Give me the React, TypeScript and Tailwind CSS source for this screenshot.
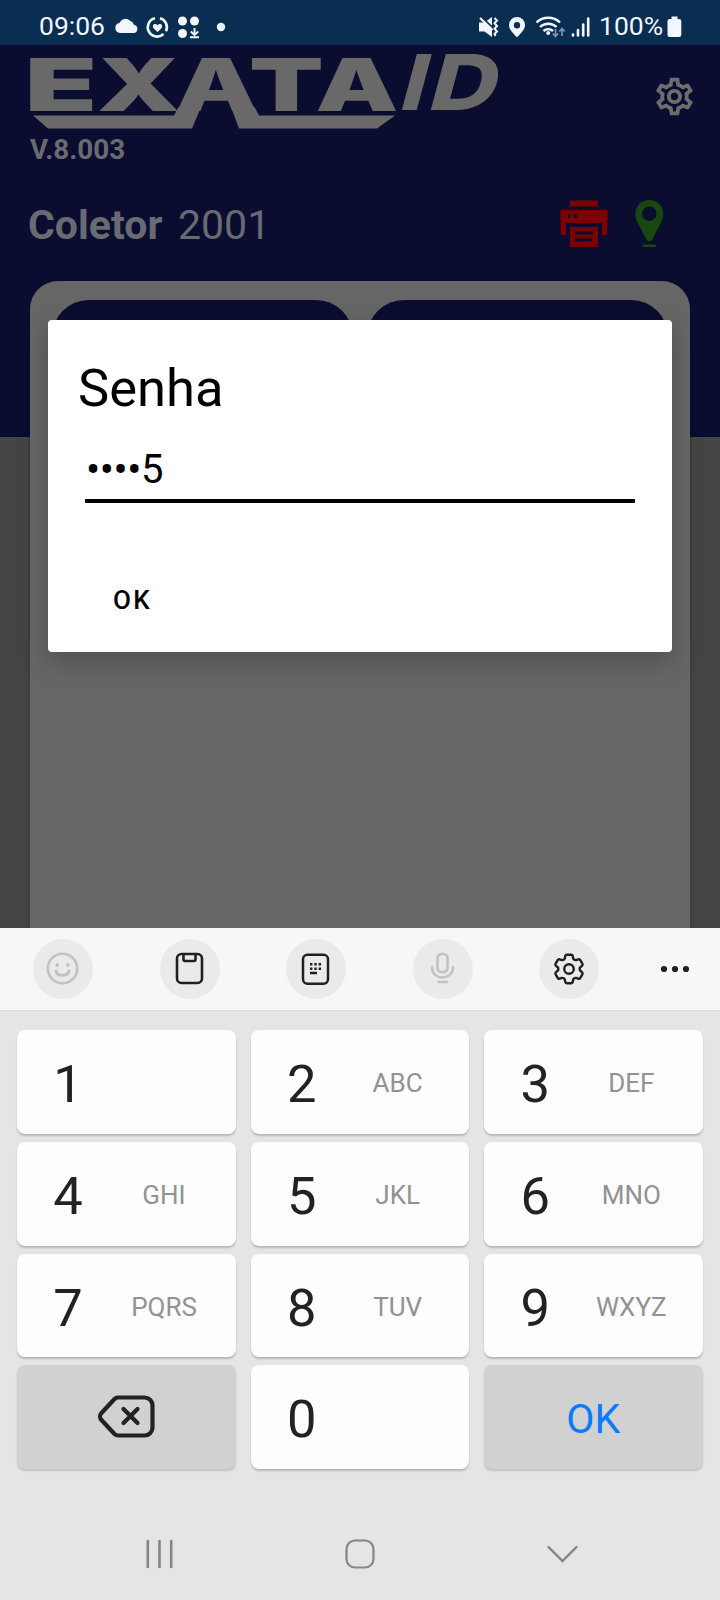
import React from "react";
import { MdOutlineSettings } from "react-icons/md";
import { HiOutlineCog6Tooth } from "react-icons/hi2";

function StatusBar() {
  return (
    <div className="flex h-[45px] shrink-0 items-center bg-[#092e52] pl-[39px] pt-[8px] text-[26.5px] leading-none text-[#f2f6ff]">
      <span className="w-[75px]">09:06</span>
      <svg className="h-[24px] w-[112px]" viewBox="114 14 112 24" fill="#f2f6ff">
        <path d="M120 32a5 5 0 0 1-.6-9.900 6.500 6.500 0 0 1 11-2 5.500 5.500 0 0 1 3.500 3.600 4.200 4.200 0 0 1-.2 8.300z" />
        <path d="M155 17.200A9.300 9.300 0 1 0 163.500 33M160 17.300a9.300 9.300 0 0 1 6 13" fill="none" stroke="#f2f6ff" strokeWidth="2.600" />
        <path d="M157.500 31l-4-3.800c-2.300-3 1.600-5.800 4-3 2.400-2.800 6.300 0 4 3z" />
        <circle cx="182.500" cy="20" r="4.500" />
        <circle cx="194.500" cy="20" r="4.500" />
        <circle cx="182.500" cy="32.500" r="4.500" />
        <path d="M194.500 27v7M190.800 30.500l3.700 3.500 3.700-3.500M190 36.200h9" fill="none" stroke="#f2f6ff" strokeWidth="1.900" />
        <circle cx="221" cy="26" r="4.200" />
      </svg>
      <svg className="ml-[252px] h-[24px] w-[114px]" viewBox="478 14 114 24" fill="#f2f6ff">
        <path d="M479 21.500h5.500L492 16v20l-7.500-5.500H479z" />
        <path d="M482.500 17l11 10.500" stroke="#092e52" strokeWidth="1.800" />
        <path d="M480 17l12.500 12" stroke="#f2f6ff" strokeWidth="2.200" />
        <path d="M494.500 17l2.500 2.500-2.500 2.800 2.500 2.700-2.500 2.800 2.500 2.700-2.500 2.500 1 2" fill="none" stroke="#f2f6ff" strokeWidth="2" />
        <path fillRule="evenodd" d="M517 16a8 8 0 0 1 8 8c0 5-4.500 8.500-8 12.300-3.500-3.800-8-7.300-8-12.300a8 8 0 0 1 8-8zm0 5a3.200 3.200 0 1 0 0 6.400 3.200 3.200 0 0 0 0-6.400z" />
        <path d="M536.500 21.500a17 17 0 0 1 23.500 0M540 26a12 12 0 0 1 16.500 0M543.500 30a7 7 0 0 1 9.500 0" fill="none" stroke="#f2f6ff" strokeWidth="2.400" />
        <circle cx="548.200" cy="32" r="2" />
        <path d="M555.500 28v7M552.800 32.500l2.700 3 2.700-3M562 35v-7M559.300 30.500l2.700-3 2.700 3" fill="none" stroke="#7e93ae" strokeWidth="1.700" />
        <path d="M573 33.500v1M578 29v5.500M583.200 23.500v11M588.200 17.500v17" stroke="#f2f6ff" strokeWidth="2.600" strokeLinecap="round" />
      </svg>
      <span className="ml-[7px] w-[68px]">100%</span>
      <svg className="h-[24px] w-[15px]" viewBox="0 0 15 24" fill="#f2f6ff">
        <path d="M4.500 1.500h6V4H12a2.300 2.300 0 0 1 2.300 2.300v13.400A2.300 2.300 0 0 1 12 22H3A2.300 2.300 0 0 1 .5 19.700V6.300A2.300 2.300 0 0 1 3 4h1.500z" />
      </svg>
    </div>
  );
}

function Logo() {
  return (
    <svg className="h-[80px] w-[480px] overflow-visible" viewBox="26 50 480 80" fill="#696969" fontFamily="Inter, sans-serif" fontWeight="900" fontSize="73.500">
      <text transform="translate(24.800 111) scale(1.610 1)">E</text>
      <text transform="translate(97 111) scale(1.440 1)">X</text>
      <text transform="translate(175 111) scale(1.420 1)">A</text>
      <text transform="translate(249 111) scale(1.480 1)">T</text>
      <text transform="translate(315.500 111) scale(1.420 1)">A</text>
      <text fontSize="77" fontWeight="800" transform="translate(397 110) skewX(-15) scale(1.120 1)">I</text>
      <text fontSize="77" fontWeight="800" transform="translate(425.500 110) skewX(-15) scale(1.220 1)">D</text>
      <path d="M33 115.500H174L178.500 107H201L192 128.500H48z" />
      <path d="M231 107H254.500L259 115.500H395L377 128.500H239z" />
    </svg>
  );
}

function Printer() {
  return (
    <svg className="h-[48px] w-[48px]" viewBox="0 0 48 48" fill="#7c0000">
      <path d="M10 0.500h28v6H10z" />
      <path fillRule="evenodd" d="M0.500 10h47v23l-2 2H42V23H6v12H2.500l-2-2zM8 14.500v3.500h3v-3.500zM14 14.500v3.500h3v-3.500z" />
      <path fillRule="evenodd" d="M10 27h28v20H10zM15 31.500v3h18v-3zM15 38.500v3h16l2-3z" />
    </svg>
  );
}

function Pin() {
  return (
    <svg className="h-[48px] w-[30px]" viewBox="0.700 0 30 48" fill="#18470f">
      <path fillRule="evenodd" d="M15 0a14 14 0 0 1 14 14c0 4-1.500 7-3 10l-8 15.500c-1.300 2.500-4.500 2.500-5.800 0L4 24c-1.500-3-3-6-3-10A14 14 0 0 1 15 0zm0 6.500a7.200 7.200 0 1 0 0 14.400 7.200 7.200 0 0 0 0-14.400z" />
      <rect x="8" y="44.500" width="14" height="2.500" rx="1.200" />
    </svg>
  );
}

function AppScreen() {
  return (
    <div className="flex h-[883px] shrink-0 flex-col overflow-hidden bg-[linear-gradient(#0a0d30_392px,#444444_392px)]">
      <div className="flex h-[85px] shrink-0 justify-between pl-[26px] pr-[23px] pt-[5px]">
        <Logo />
        <MdOutlineSettings className="mt-[24px] h-[45px] w-[45px] text-[#6d6d6d]" />
      </div>
      <div className="h-[50px] shrink-0 pl-[30px] pt-[6px] text-[27.8px] font-bold leading-[28px] text-[#6a6b70]">V.8.003</div>
      <div className="flex h-[101px] shrink-0 pl-[28px] pt-[20px]">
        <span className="mt-[5px] w-[150px] text-[41px] font-bold leading-[41px] text-[#696b73]">Coletor</span>
        <span className="mt-[5px] w-[382px] text-[41px] leading-[41px] text-[#696b73]">2001</span>
        <Printer />
        <div className="w-[27px]" />
        <Pin />
      </div>
      <div className="mx-[30px] flex flex-1 items-start gap-[14px] rounded-t-[28px] bg-[#666666] px-[22px] pt-[19px] shadow-[0_0_4px_rgba(0,0,0,0.25)]">
        <div className="h-[100px] flex-1 rounded-[37px] bg-[#0a0d30]" />
        <div className="h-[100px] flex-1 rounded-[37px] bg-[#0a0d30]" />
      </div>
    </div>
  );
}

function PasswordDialog() {
  return (
    <div className="absolute left-[48px] top-[320px] flex h-[332px] w-[624px] flex-col rounded-[4px] bg-white pl-[30px] pr-[37px] pt-[42px] text-black shadow-[0_10px_28px_rgba(0,0,0,0.22)]">
      <div className="h-[81px] text-[52.5px] leading-[53px]">Senha</div>
      <div className="ml-[7px] flex h-[60px] items-start border-b-4 border-black text-[40px] leading-[53px]">
        <span className="pl-px text-[42px] tracking-[-0.400px]">••••</span>
        <span>5</span>
      </div>
      <div className="ml-[35px] mt-[84px] text-[26px] font-medium leading-[26px] tracking-[2.400px]">OK</div>
    </div>
  );
}

function ToolButton({ children }: { children: React.ReactNode }) {
  return <div className="flex h-[60px] w-[60px] items-center justify-center rounded-full bg-[#eaeaea]">{children}</div>;
}

function Toolbar() {
  return (
    <div className="flex h-[83px] shrink-0 items-center gap-[66.500px] border-b border-[#dedede] bg-[#f7f7f7] pb-px pl-[33px]">
      <ToolButton>
        <svg className="h-[34px] w-[34px]" viewBox="0 0 34 34" fill="none" stroke="#c2c2c2" strokeWidth="2.600" strokeLinecap="round">
          <circle cx="16.500" cy="16.500" r="14.700" />
          <path d="M10 19c1 5.800 12 5.800 13 0" strokeWidth="3" />
          <circle cx="11.200" cy="13" r="1.900" fill="#c2c2c2" stroke="none" />
          <circle cx="21.800" cy="13" r="1.900" fill="#c2c2c2" stroke="none" />
        </svg>
      </ToolButton>
      <ToolButton>
        <svg className="h-[34px] w-[30px]" viewBox="0 0 30 34" fill="none" stroke="#202020" strokeWidth="2.600">
          <rect x="2" y="2" width="25" height="29" rx="4.500" />
          <path d="M8.500 2v5.500a1.500 1.500 0 0 0 1.500 1.500h9a1.500 1.500 0 0 0 1.500-1.500V2" />
        </svg>
      </ToolButton>
      <ToolButton>
        <svg className="h-[34px] w-[30px]" viewBox="0 0.300 30 34" fill="none" stroke="#202020" strokeWidth="2.500">
          <rect x="2" y="3" width="25" height="29" rx="4.500" />
          <path d="M9 12.500h2.400m1.900 0h2.400m1.900 0h2.400M9 17h2.400m1.900 0h2.400m1.900 0h2.400M9 21.300h7" />
        </svg>
      </ToolButton>
      <ToolButton>
        <svg className="h-[34px] w-[30px]" viewBox="0 0 30 34" fill="none" stroke="#c2c2c2" strokeWidth="2.600" strokeLinecap="round">
          <rect x="9.500" y="2" width="10" height="18" rx="4" />
          <path d="M4 15c0 14 21 14 21 0M10.500 30h8.500" />
        </svg>
      </ToolButton>
      <ToolButton>
        <HiOutlineCog6Tooth className="-ml-px h-[38px] w-[38px] text-[#202020]" />
      </ToolButton>
      <svg className="-ml-[5.500px] h-[8px] w-[30px]" viewBox="0 0 30 8" fill="#202020">
        <circle cx="4" cy="4" r="3.100" />
        <circle cx="15" cy="4" r="3.100" />
        <circle cx="26" cy="4" r="3.100" />
      </svg>
    </div>
  );
}

const keys: [string, string][] = [
  ["1", ""], ["2", "ABC"], ["3", "DEF"],
  ["4", "GHI"], ["5", "JKL"], ["6", "MNO"],
  ["7", "PQRS"], ["8", "TUV"], ["9", "WXYZ"],
];

function Key({ digit, letters }: { digit: string; letters: string }) {
  return (
    <div className="flex items-center rounded-[8px] bg-[#fdfdfd] pl-[35px] pt-[3px] shadow-[0_2px_2px_rgba(0,0,0,0.2)]">
      <span className="mt-[2px] w-[32px] text-center text-[52.500px] leading-none text-[#222222]">{digit}</span>
      <span className="ml-[30px] w-[100px] text-center text-[26px] leading-none text-[#929292]">{letters}</span>
    </div>
  );
}

function Keypad() {
  return (
    <div className="mx-[17px] mt-[19px] grid h-[439px] shrink-0 grid-cols-3 grid-rows-4 gap-x-[15px] gap-y-[8px]">
      {keys.map(([digit, letters]) => (
        <Key key={digit} digit={digit} letters={letters} />
      ))}
      <div className="flex items-center justify-center rounded-[8px] bg-[#d1d1d1] pl-[2px] shadow-[0_2px_2px_rgba(0,0,0,0.16)]">
        <svg className="h-[44px] w-[58px]" viewBox="0 0 58 44" fill="none" stroke="#222222" strokeWidth="4.200" strokeLinecap="round" strokeLinejoin="round">
          <path d="M20 2.500H46.500a8 8 0 0 1 8 8v22a8 8 0 0 1-8 8H20a5 5 0 0 1-3.500-1.500L3.500 25a5 5 0 0 1 0-7L16.500 4A5 5 0 0 1 20 2.500z" />
          <path d="M25.500 14l14 14M39.500 14l-14 14" />
        </svg>
      </div>
      <Key digit="0" letters="" />
      <div className="flex items-center justify-center rounded-[8px] bg-[#d1d1d1] pr-px pt-[5px] text-[41px] leading-none text-[#0a7aff] shadow-[0_2px_2px_rgba(0,0,0,0.16)]">OK</div>
    </div>
  );
}

function NavBar() {
  return (
    <div className="flex flex-1 items-center justify-between px-[144px] pt-[38px]">
      <svg className="h-[32px] w-[32px]" viewBox="-1 0 32 32" stroke="#858585" strokeWidth="2.600" strokeLinecap="round">
        <path d="M2.800 3v26M14.500 3v26M26.200 3v26" />
      </svg>
      <svg className="h-[32px] w-[32px]" viewBox="0 0 32 32" fill="none" stroke="#858585" strokeWidth="2.200">
        <rect x="2.500" y="2.500" width="27" height="27" rx="8.500" />
      </svg>
      <svg className="h-[32px] w-[32px] overflow-visible" viewBox="-2.500 0 32 32" fill="none" stroke="#858585" strokeWidth="2.400" strokeLinecap="round">
        <path d="M2 9l14 14 14-14" />
      </svg>
    </div>
  );
}

export default function App() {
  return (
    <div className="relative flex h-[1600px] w-[720px] flex-col overflow-hidden bg-[#e5e5e5] font-[Roboto,sans-serif]">
      <StatusBar />
      <AppScreen />
      <PasswordDialog />
      <Toolbar />
      <Keypad />
      <NavBar />
    </div>
  );
}
